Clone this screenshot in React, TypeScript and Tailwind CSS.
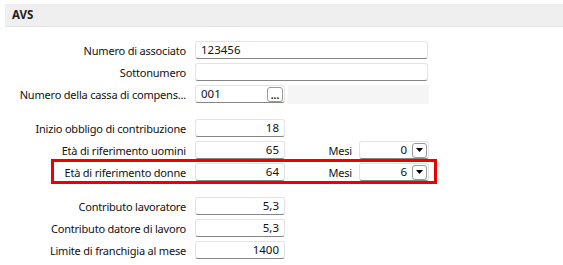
import React from "react";

const font = { fontFamily: '"Noto Sans", "Open Sans", sans-serif' };

function Field({ value, align = "left", className = "" }: { value?: string; align?: "left" | "right"; className?: string }) {
  return (
    <div
      className={`h-[18px] bg-white border border-[#e3e3e3] border-b-[#858585] rounded-[3px] flex items-center px-[5px] text-[11.5px] text-[#111] ${align === "right" ? "justify-end" : "justify-start"} ${className}`}
    >
      {value}
    </div>
  );
}

function Row({ label, children }: { label: string; children: React.ReactNode }) {
  return (
    <div className="flex items-center h-[18px]">
      <div className="w-[181px] text-right text-[11px] tracking-[-0.2px] text-[#111] whitespace-nowrap leading-none">{label}</div>
      <div className="ml-[9px] flex items-center">{children}</div>
    </div>
  );
}

function Combo({ value }: { value: string }) {
  return (
    <div className="w-[70px] h-[18px] bg-white border border-[#e3e3e3] border-b-[#858585] rounded-[3px] flex items-center justify-end pr-[1px] text-[11.5px] text-[#111]">
      <span className="mr-[5px]">{value}</span>
      <div className="w-[15px] h-[15px] border border-[#9a9a9a] rounded-[3px] bg-white flex items-center justify-center">
        <svg width="7" height="4" viewBox="0 0 7 4">
          <path d="M0 0 L7 0 L3.5 4 Z" fill="#000" />
        </svg>
      </div>
    </div>
  );
}

function Mesi({ value }: { value: string }) {
  return (
    <div className="flex items-center">
      <span className="w-[67px] text-right text-[11px] tracking-[-0.2px] text-[#111] leading-none">Mesi</span>
      <div className="ml-[7px]">
        <Combo value={value} />
      </div>
    </div>
  );
}

export default function App() {
  return (
    <div className="w-[563px] h-[265px] bg-white overflow-hidden pl-[5px] pt-[4px]" style={font}>
      <div className="h-[23px] bg-[#efefef] border-b border-[#e2e2e2] flex items-center pl-[7px] text-[11.5px] font-bold text-[#222]">
        AVS
      </div>

      <div className="mt-[14px] flex flex-col gap-[4px]">
        <Row label="Numero di associato">
          <Field value="123456" className="w-[233px]" />
        </Row>
        <Row label="Sottonumero">
          <Field className="w-[233px]" />
        </Row>
        <Row label="Numero della cassa di compens...">
          <div className="flex items-center">
            <div className="w-[90px] h-[18px] bg-white border border-[#e3e3e3] border-b-[#858585] rounded-[3px] flex items-center justify-between pl-[5px] pr-[1px] text-[11.5px] text-[#111]">
              <span>001</span>
              <div className="w-[16px] h-[15px] border border-[#9a9a9a] rounded-[3px] bg-white flex items-end justify-center pb-[1px] text-[10px] font-bold leading-none">
                ...
              </div>
            </div>
            <div className="ml-[3px] w-[141px] h-[19px] bg-[#f5f5f5]" />
          </div>
        </Row>
      </div>

      <div className="mt-[16px] flex flex-col gap-[4px]">
        <Row label="Inizio obbligo di contribuzione">
          <Field value="18" align="right" className="w-[90px]" />
        </Row>
        <Row label="Età di riferimento uomini">
          <div className="flex items-center">
            <Field value="65" align="right" className="w-[90px]" />
            <Mesi value="0" />
          </div>
        </Row>
        <div className="relative">
          <Row label="Età di riferimento donne">
            <div className="flex items-center">
              <Field value="64" align="right" className="w-[90px]" />
              <Mesi value="6" />
            </div>
          </Row>
          <div className="absolute left-[46px] top-[-4px] w-[386px] h-[25px] border-[3px] border-[#ee0000] pointer-events-none" />
        </div>
      </div>

      <div className="mt-[16px] flex flex-col gap-[4px]">
        <Row label="Contributo lavoratore">
          <Field value="5,3" align="right" className="w-[90px]" />
        </Row>
        <Row label="Contributo datore di lavoro">
          <Field value="5,3" align="right" className="w-[90px]" />
        </Row>
        <Row label="Limite di franchigia al mese">
          <Field value="1400" align="right" className="w-[90px]" />
        </Row>
      </div>
    </div>
  );
}
